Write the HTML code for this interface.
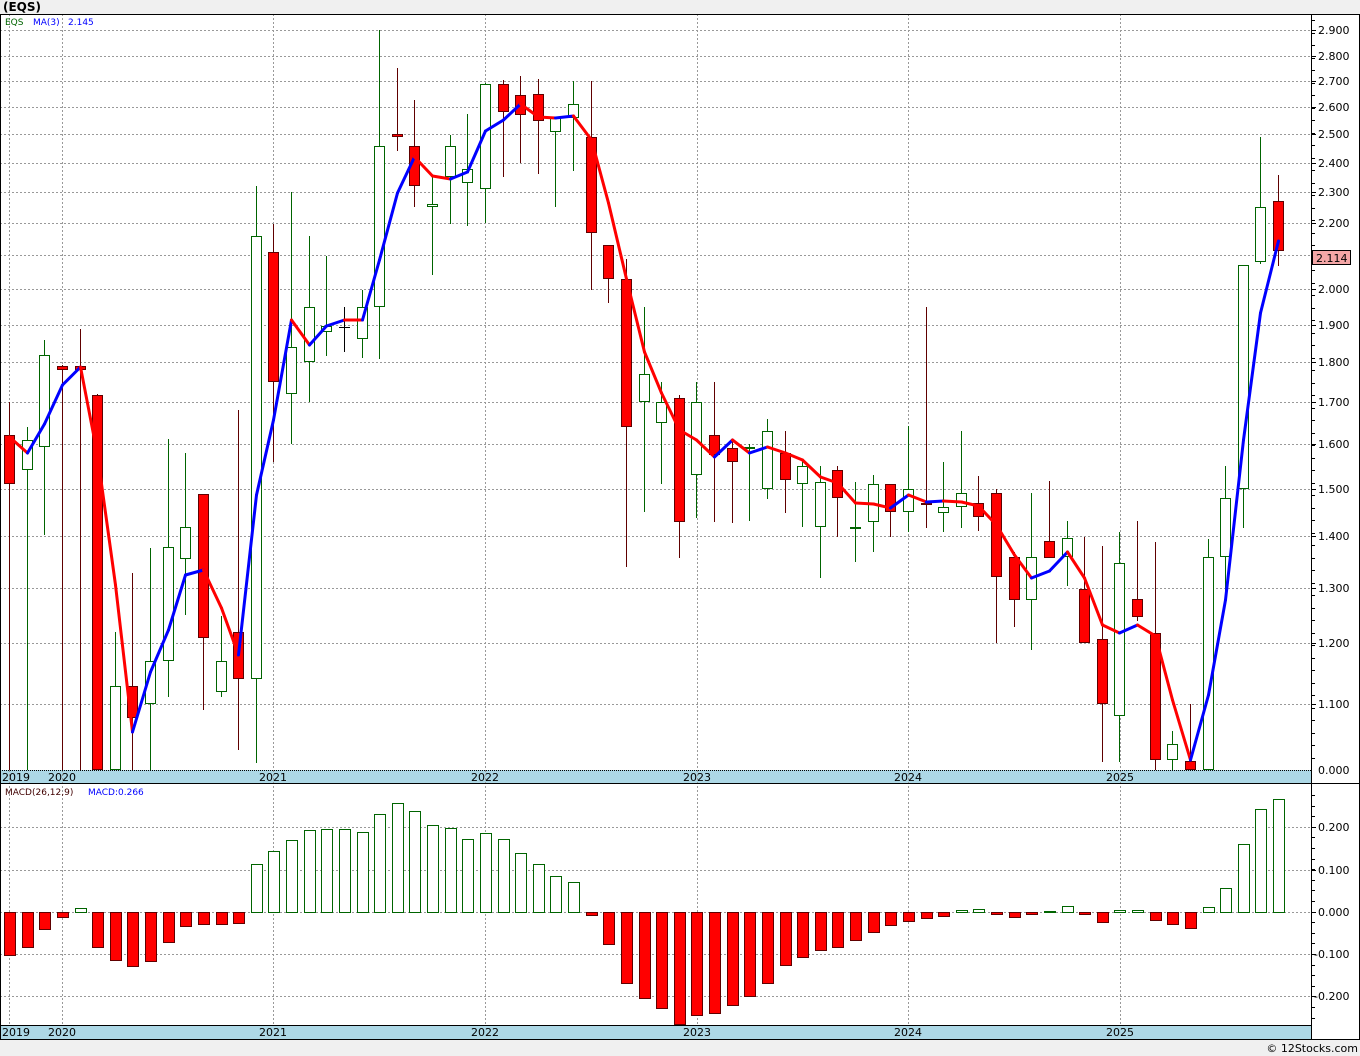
<!DOCTYPE html>
<html><head><meta charset="utf-8"><style>
html,body{margin:0;padding:0;background:#f0f0f0;}
svg{display:block;font-family:"DejaVu Sans","Liberation Sans",sans-serif;}
</style></head><body>
<svg id="s" width="1360" height="1056" xmlns="http://www.w3.org/2000/svg">
<rect x="0" y="0" width="1360" height="1056" fill="#f0f0f0"/>
<rect x="0" y="14" width="1311" height="756" fill="#fff"/>
<rect x="0" y="784" width="1311" height="241" fill="#fff"/>
<rect x="1311" y="14" width="49" height="1026" fill="#fff"/>
<rect x="0" y="770" width="1311" height="13" fill="#add8e6"/>
<rect x="0" y="1025" width="1311" height="14" fill="#add8e6"/>
<g id="grid"></g>
<g id="cand"></g>
<g id="ma"></g>
<g id="macd"></g>
<line x1="0" y1="14.5" x2="1360" y2="14.5" stroke="#000"/>
<line x1="0" y1="783.5" x2="1360" y2="783.5" stroke="#000"/>
<line x1="0" y1="1025.5" x2="1311" y2="1025.5" stroke="#000"/>
<line x1="0" y1="1039.5" x2="1360" y2="1039.5" stroke="#000"/>
<line x1="0" y1="770.5" x2="1311" y2="770.5" stroke="#000" stroke-dasharray="1,1"/>
<line x1="1311.5" y1="14" x2="1311.5" y2="1040" stroke="#000"/>
<line x1="1359.5" y1="14" x2="1359.5" y2="1040" stroke="#000"/>
<line x1="0.5" y1="14" x2="0.5" y2="1040" stroke="#000"/>
<g id="axis" font-size="11" fill="#000"></g>
<text x="3" y="11" font-size="12" font-weight="bold">(EQS)</text>
<text x="5" y="25" font-size="9" fill="#006400">EQS</text>
<text x="33" y="25" font-size="9" fill="#0000ff">MA(3)</text>
<text x="68" y="25" font-size="9" fill="#0000ff">2.145</text>
<text x="5" y="795" font-size="9" fill="#400000">MACD(26,12,9)</text>
<text x="88" y="795" font-size="9" fill="#0000ff">MACD:0.266</text>
<rect x="1312.5" y="250.5" width="38" height="14" fill="#f4a6a6" stroke="#000"/>
<text x="1316" y="262" font-size="11">2.114</text>
<text x="1358" y="1052" font-size="11" text-anchor="end">© 12Stocks.com</text>
</svg>
<script>
var NS="http://www.w3.org/2000/svg";
function el(p,t,a,txt){var e=document.createElementNS(NS,t);for(var k in a)e.setAttribute(k,a[k]);if(txt!=null)e.textContent=txt;document.getElementById(p).appendChild(e);return e;}
function px(i){return Math.round(9+17.625*i);}
var prices=[[2.9,30],[2.8,56],[2.7,81],[2.6,107],[2.5,134],[2.4,163],[2.3,192],[2.2,223],[2.1,255],[2.0,289],[1.9,325],[1.8,362],[1.7,402],[1.6,444],[1.5,489],[1.4,536],[1.3,588],[1.2,643],[1.1,704]];
prices.forEach(function(p){el("grid","line",{x1:0,x2:1311,y1:p[1]+.5,y2:p[1]+.5,stroke:"#999","stroke-dasharray":"2,2"});
 if(p[0]!=2.1)el("axis","text",{x:1318,y:p[1]+4},p[0].toFixed(3));
 el("axis","line",{x1:1311,x2:1316,y1:p[1]+.5,y2:p[1]+.5,stroke:"#000"});});
el("axis","text",{x:1318,y:774},"0.000");
[[0.2,827],[0.1,870],[0,912],[-0.1,954],[-0.2,996]].forEach(function(p){
 el("grid","line",{x1:0,x2:1311,y1:p[1]+.5,y2:p[1]+.5,stroke:"#999","stroke-dasharray":"2,2"});
 el("axis","text",{x:p[0]<0?1314:1318,y:p[1]+4},p[0].toFixed(3));
 el("axis","line",{x1:1311,x2:1316,y1:p[1]+.5,y2:p[1]+.5,stroke:"#000"});});
for(var y=795;y<1025;y+=10.6)el("axis","line",{x1:1311,x2:1315,y1:Math.round(y)+.5,y2:Math.round(y)+.5,stroke:"#000"});
for(var y=20;y<770;y+=12.5)el("axis","line",{x1:1311,x2:1315,y1:Math.round(y)+.5,y2:Math.round(y)+.5,stroke:"#000"});
var yrs=[[9,"2019"],[62,"2020"],[273,"2021"],[485,"2022"],[697,"2023"],[908,"2024"],[1120,"2025"]];
yrs.forEach(function(v){el("grid","line",{x1:v[0]+.5,x2:v[0]+.5,y1:14,y2:1025,stroke:"#999","stroke-dasharray":"2,2"});
 var a=v[1]=="2019"?"start":"middle",xx=v[1]=="2019"?2:v[0];
 el("axis","text",{x:xx,y:781,"text-anchor":a},v[1]);el("axis","text",{x:xx,y:1036,"text-anchor":a},v[1]);});
var C=[["r",402,770,435,484],["g",427,770,440,470],["g",340,535,355,447],["r",365,770,366,370],["r",329,770,366,370],["r",394,770,395,770],["g",632,770,686,770],["r",573,770,686,718],["g",548,770,661,704],["g",439,697,547,661],["g",453,615,527,559],["r",494,710,494,638],["g",616,697,661,692],["r",410,750,632,679],["g",186,763,236,679],["r",224,462,252,382],["g",192,444,347,394],["g",236,402,307,362],["g",256,356,326,332],["k",307,352,327,327],["g",290,358,307,339],["g",30,359,146,307],["r",68,151,134,137],["r",100,207,146,186],["g",176,275,204,207],["g",135,224,146,177],["g",114,226,169,183],["g",83,223,84,189],["r",80,177,84,112],["r",76,163,95,115],["r",79,174,94,121],["g",118,207,118,132],["g",81,171,104,118],["r",81,290,137,233],["r",258,303,245,279],["r",259,567,279,427],["g",307,512,374,402],["g",382,484,402,423],["r",395,558,398,522],["g",382,518,402,475],["r",382,522,435,455],["r",442,523,448,462],["g",444,521,447,449],["g",419,499,431,489],["r",431,513,453,480],["g",459,527,466,484],["g",466,578,482,527],["r",466,537,470,498],["g",482,562,527,529],["g",475,552,484,522],["r",484,537,484,512],["g",426,532,489,512],["r",307,528,503,504],["g",462,532,507,513],["g",431,528,493,507],["r",476,531,503,517],["r",489,643,493,577],["r",552,627,557,600],["g",493,650,557,600],["r",481,548,541,558],["g",521,586,538,557],["r",537,643,589,643],["r",546,762,639,704],["g",532,762,563,716],["r",521,621,599,617],["r",542,770,633,760],["g",731,770,744,760],["r",704,770,761,770],["g",539,770,557,770],["g",466,594,498,557],["g",275,528,265,489],["g",137,264,207,262],["r",175,266,201,251]];
C.forEach(function(c,i){var x=px(i);var wc=c[0]=="r"?"#600000":c[0]=="g"?"#006400":"#000";
 el("cand","line",{x1:x+.5,x2:x+.5,y1:c[1],y2:c[2],stroke:wc});
 var h=Math.max(c[4]-c[3],2);
 if(c[0]=="k"){el("cand","line",{x1:x-5,x2:x+6,y1:c[3]+.5,y2:c[3]+.5,stroke:"#000"});return;}
 el("cand","rect",{x:x-4.5,y:c[3]+.5,width:10,height:h-1,fill:c[0]=="r"?"#ff0000":"#fff",stroke:c[0]=="r"?"#600000":"#006400"});});
var M=[[0,437,"r"],[1,453,"b"],[2,424,"b"],[3,385,"b"],[4,367,"r"],[5,455,"r"],[6,585,"r"],[7,732,"b"],[8,672,"b"],[9,630,"b"],[10,575,"b"],[11,570,"r"],[12,608,"r"],[13,655,"b"],[14,495,"b"],[15,420,"b"],[16,320,"r"],[17,345,"b"],[18,326,"b"],[19,320,"r"],[20,320,"b"],[21,260,"b"],[22,193,"b"],[23,157,"r"],[24,176,"r"],[25,179,"b"],[26,172,"b"],[27,131,"b"],[28,120,"b"],[29,104,"r"],[30,117,"r"],[31,118,"b"],[32,116,"r"],[33,140,"r"],[34,203,"r"],[35,279,"r"],[36,352,"r"],[37,393,"r"],[38,430,"r"],[39,440,"r"],[40,457,"b"],[41,440,"r"],[42,453,"b"],[43,447,"r"],[44,453,"r"],[45,460,"r"],[46,477,"r"],[47,483,"r"],[48,503,"r"],[49,504,"r"],[50,508,"b"],[51,495,"r"],[52,502,"b"],[53,501,"r"],[54,502,"r"],[55,506,"r"],[56,525,"r"],[57,555,"r"],[58,578,"b"],[59,571,"b"],[60,552,"r"],[61,578,"r"],[62,625,"r"],[63,633,"b"],[64,625,"r"],[65,636,"r"],[66,700,"r"],[67,760,"b"],[68,695,"b"],[69,600,"b"],[70,440,"b"],[71,313,"b"],[72,241,"b"]];
for(var i=0;i<M.length-1;i++){el("ma","line",{x1:px(M[i][0])+.5,y1:M[i][1],x2:px(M[i+1][0])+.5,y2:M[i+1][1],stroke:M[i][2]=="r"?"#ff0000":"#0000ff","stroke-width":3,"stroke-linecap":"round"});}
var H=[955,947,929,917,908,947,960,966,961,942,926,924,924,923,864,851,840,830,829,829,832,814,803,811,825,828,839,833,839,853,864,876,882,915,944,983,998,1008,1024,1015,1013,1005,996,983,965,957,950,947,940,932,925,921,918,916,910,909,914,917,914,911,906,914,922,910,910,920,924,928,907,888,844,809,799];
H.forEach(function(v,i){var x=px(i);
 if(v<912)el("macd","rect",{x:x-4.5,y:v+.5,width:11,height:912-v,fill:"#fff",stroke:"#006400"});
 else el("macd","rect",{x:x-4.5,y:912.5,width:11,height:v-912,fill:"#ff0000",stroke:"#600000"});});
</script>
</body></html>
